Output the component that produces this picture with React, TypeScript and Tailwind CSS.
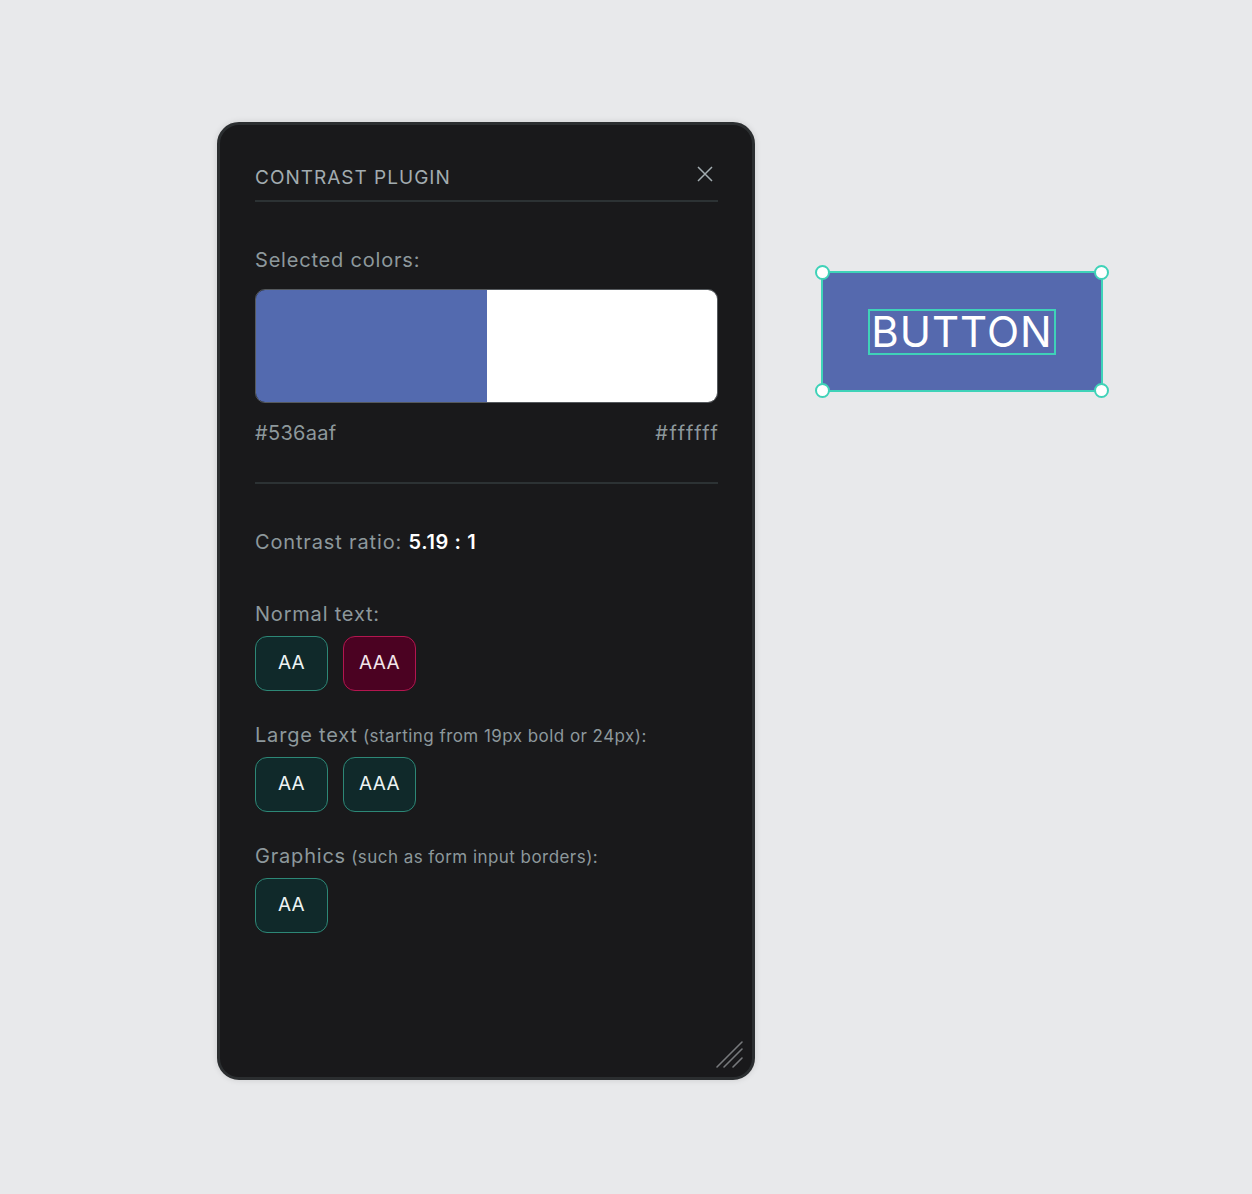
import React from "react";

const FONT = { fontFamily: "Inter, 'Noto Sans', sans-serif" };

type Level = { label: string; pass: boolean };

function Badge({ label, pass }: Level) {
  return (
    <div
      className={
        pass
          ? "flex h-[55px] w-[73px] items-center justify-center rounded-[12px] border border-[#2d8776] bg-[#10292a] text-[19px] tracking-[0.3px] text-[#eef3f3]"
          : "flex h-[55px] w-[73px] items-center justify-center rounded-[12px] border border-[#b3164f] bg-[#4b0222] text-[19px] tracking-[0.3px] text-[#f3e6ea]"
      }
    >
      {label}
    </div>
  );
}

function Section({
  title,
  note,
  levels,
  className,
}: {
  title: string;
  note?: string;
  levels: Level[];
  className: string;
}) {
  return (
    <div className={className}>
      <p className="h-[28px] text-[20px] leading-[28px] tracking-[0.8px] text-[#8d989c]">
        {title}
        {note && <span className="text-[17px] tracking-[0.45px]"> {note}</span>}
      </p>
      <div className="mt-[8px] flex gap-[15px]">
        {levels.map((l) => (
          <Badge key={l.label} {...l} />
        ))}
      </div>
    </div>
  );
}

function Handle({ className }: { className: string }) {
  return (
    <span
      className={
        "absolute h-[15px] w-[15px] rounded-full border-2 border-[#3fd2b8] bg-white " +
        className
      }
    />
  );
}

export default function App() {
  return (
    <div
      className="flex min-h-[1194px] items-start bg-[#e8e9eb] pl-[217px] pt-[122px]"
      style={FONT}
    >
      {/* plugin panel */}
      <div className="relative h-[958px] w-[538px] rounded-[22px] border-[3px] border-[#2b2e30] bg-[#19191b] pl-[35px] pr-[34px] pt-[41px] shadow-[0_0_6px_rgba(0,0,0,0.12)]">
        <div className="flex items-center justify-between border-b-2 border-[#2c3234] pb-[10px]">
          <h1 className="text-[19px] leading-[24px] tracking-[1px] text-[#a2acb0]">
            CONTRAST PLUGIN
          </h1>
          <svg
            width="18"
            height="18"
            viewBox="0 0 18 18"
            className="-mt-[9px] mr-[4px]"
            stroke="#a2acb0"
            strokeWidth="1.5"
          >
            <path d="M2 2L16 16M16 2L2 16" />
          </svg>
        </div>

        <p className="mt-[44px] text-[20px] leading-[28px] tracking-[0.8px] text-[#8d989c]">
          Selected colors:
        </p>
        <div className="mt-[15px] flex h-[114px] overflow-hidden rounded-[10px] border border-[#55595d]">
          <div className="w-1/2 bg-[#536aaf]" />
          <div className="w-1/2 bg-white" />
        </div>
        <div className="mt-[16px] flex justify-between text-[20px] leading-[28px] text-[#8d989c]">
          <span className="tracking-[0.3px]">#536aaf</span>
          <span className="-mr-[1.6px] tracking-[1.6px]">#ffffff</span>
        </div>

        <div className="mt-[35px] h-[2px] bg-[#2c3234]" />

        <p className="mt-[44px] text-[20px] leading-[28px] tracking-[0.85px] text-[#8d989c]">
          Contrast ratio:{" "}
          <span className="font-semibold tracking-[0.6px] text-white">5.19 : 1</span>
        </p>

        <Section
          className="mt-[44px]"
          title="Normal text:"
          levels={[
            { label: "AA", pass: true },
            { label: "AAA", pass: false },
          ]}
        />
        <Section
          className="mt-[30px]"
          title="Large text"
          note="(starting from 19px bold or 24px):"
          levels={[
            { label: "AA", pass: true },
            { label: "AAA", pass: true },
          ]}
        />
        <Section
          className="mt-[30px]"
          title="Graphics"
          note="(such as form input borders):"
          levels={[{ label: "AA", pass: true }]}
        />

        {/* resize grip */}
        <svg
          width="30"
          height="30"
          viewBox="0 0 30 30"
          className="absolute bottom-[7px] right-[7px]"
          stroke="#77797c"
          strokeWidth="1.6"
          strokeLinecap="round"
        >
          <path d="M2 27L27 2M9 27L27 9M18 27L27 18" />
        </svg>
      </div>

      {/* selected button on canvas */}
      <div className="relative ml-[66px] mt-[149px] flex h-[121px] w-[282px] items-center justify-center border-2 border-[#3fd2b8] bg-[#5569ae]">
        <span className="border-2 border-[#3fd2b8] px-[1px] text-[42px] leading-[42px] tracking-[1px] text-white">
          BUTTON
        </span>
        <Handle className="-left-[8px] -top-[8px]" />
        <Handle className="-right-[8px] -top-[8px]" />
        <Handle className="-bottom-[8px] -left-[8px]" />
        <Handle className="-bottom-[8px] -right-[8px]" />
      </div>
    </div>
  );
}
